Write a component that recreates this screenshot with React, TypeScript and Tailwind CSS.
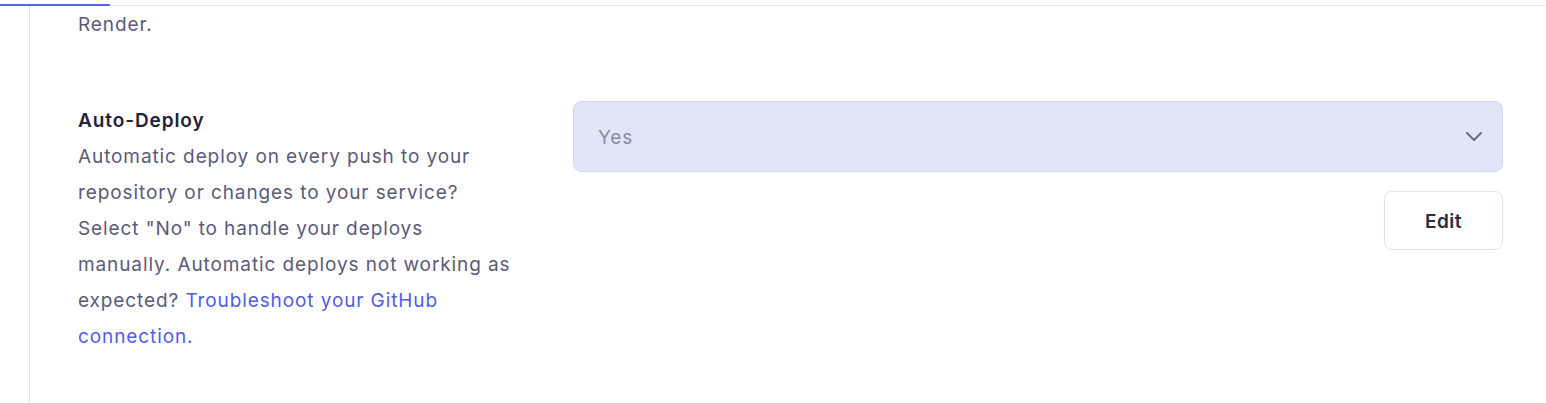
export default function App() {
  return (
    <div className="relative min-h-[403px] bg-white font-['Inter',sans-serif] border-t border-[#e3e8f4] mt-[5px]">
      <div className="absolute left-0 top-[-2px] h-[2px] w-[110px] bg-[#5a5ff0]" />
      <div className="ml-[29px] border-l border-[#dbe1ee] min-h-[397px] pl-[48px] pr-[43px]">
        <p className="pt-px text-[19px] leading-[36px] tracking-[0.9px] text-[#5b5b7d]">Render.</p>

        <div className="mt-[59px] flex">
          <div className="w-[495px] shrink-0 pr-[20px] pt-px">
            <h3 className="text-[19px] leading-[36px] tracking-[0.9px] font-semibold text-[#23233a]">Auto-Deploy</h3>
            <p className="text-[19px] leading-[36px] tracking-[0.9px] text-[#5b5b7d] whitespace-nowrap">
              Automatic deploy on every push to your
              <br />
              repository or changes to your service?
              <br />
              Select "No" to handle your deploys
              <br />
              manually. Automatic deploys not working as
              <br />
              expected?{" "}
              <a href="#" className="text-[#4f5ef0]">
                Troubleshoot your GitHub
                <br />
                connection.
              </a>
            </p>
          </div>

          <div className="flex-1 flex flex-col items-end -mt-px">
            <div className="w-full h-[71px] rounded-lg border border-[#cfd9f2] bg-[#dfe6f8] flex items-center justify-between pl-[24px] pr-[20px] pt-[3px]">
              <span className="text-[19px] tracking-[0.9px] text-[#8a8aa6]">Yes</span>
              <svg width="16" height="9" viewBox="0 0 16 9" fill="none" className="text-[#6b6b85] -mt-[3px]">
                <path d="M1 1l7 7 7-7" stroke="currentColor" strokeWidth="2" strokeLinecap="round" strokeLinejoin="round" />
              </svg>
            </div>
            <button className="mt-[19px] h-[59px] w-[119px] rounded-lg border border-[#dbe3f5] bg-white pt-[3px] text-[19px] tracking-[0.5px] font-semibold text-[#2a2a45]">
              Edit
            </button>
          </div>
        </div>
      </div>
    </div>
  );
}
